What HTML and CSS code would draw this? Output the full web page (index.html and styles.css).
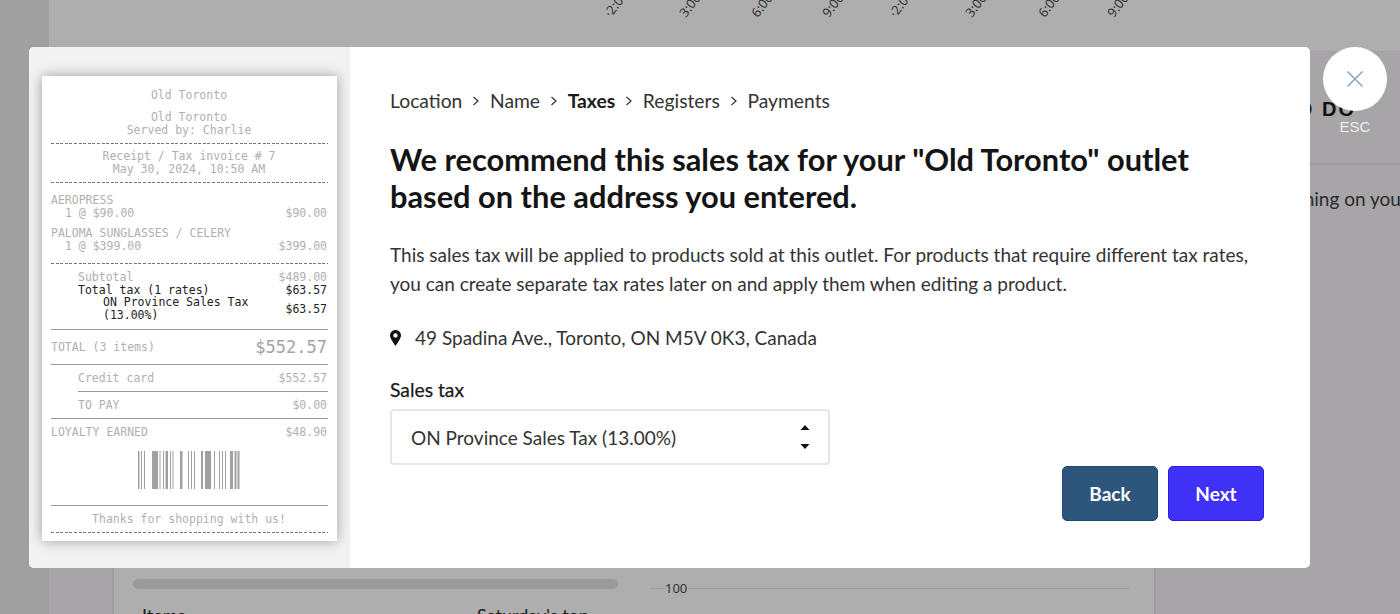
FILE: index.html
```html
<!DOCTYPE html>
<html lang="en">
<head>
<meta charset="utf-8">
<title>Outlet setup</title>
<link rel="stylesheet" href="styles.css">
</head>
<body>
<div class="page">
  <div class="sidebar"></div>
  <main class="content">
    <section class="chart-top">
      <span class="tick t1">·2:00</span><span class="tick t2">3:00</span><span class="tick t3">6:00</span><span class="tick t4">9:00</span>
      <span class="tick t5">·2:00</span><span class="tick t6">3:00</span><span class="tick t7">6:00</span><span class="tick t8">9:00</span>
    </section>
    <div class="lower">
      <section class="card">
        <div class="card-foot">
          <div class="bar-col">
            <div class="grey-bar"></div>
            <div class="foot-labels"><span class="foot-first">Items</span><span>Saturday's top</span></div>
          </div>
          <div class="axis"><span class="axis-line short"></span><span>100</span><span class="axis-line"></span></div>
        </div>
      </section>
      <aside class="right">
        <div class="right-head"><strong>TO DO</strong></div>
        <p>Everything on your</p>
      </aside>
    </div>
  </main>
</div>

<div class="modal">
  <div class="preview">
    <div class="receipt">
      <div class="center">Old Toronto</div>
      <div class="center gap-s">Old Toronto<br>Served by: Charlie</div>
      <div class="dash"></div>
      <div class="center">Receipt / Tax invoice # 7<br>May 30, 2024, 10:50 AM</div>
      <div class="dash"></div>
      <div class="item first">AEROPRESS</div>
      <div class="row"><span class="ind1">1 @ $90.00</span><span>$90.00</span></div>
      <div class="item second">PALOMA SUNGLASSES / CELERY</div>
      <div class="row"><span class="ind1">1 @ $399.00</span><span>$399.00</span></div>
      <div class="dash after-list"></div>
      <div class="row ind2 lead"><span>Subtotal</span><span>$489.00</span></div>
      <div class="row ind2 dark"><span>Total tax (1 rates)</span><span>$63.57</span></div>
      <div class="row ind3 dark mid tight"><span>ON Province Sales Tax<br>(13.00%)</span><span>$63.57</span></div>
      <div class="solid after-tax"></div>
      <div class="row mid total"><span>TOTAL (3 items)</span><span class="big">$552.57</span></div>
      <div class="solid"></div>
      <div class="row ind2 pad"><span>Credit card</span><span>$552.57</span></div>
      <div class="solid inset"></div>
      <div class="row ind2 pad"><span>TO PAY</span><span>$0.00</span></div>
      <div class="solid"></div>
      <div class="row pad"><span>LOYALTY EARNED</span><span>$48.90</span></div>
      <svg class="barcode" width="102" height="38" viewBox="0 0 102 38" aria-hidden="true"><path d="M0 0h1.500v38H0zM3 0h1v38H3zM6 0h1v38H6zM14 0h6v38h-6zM21.500 0h1v38h-1zM25 0h1v38h-1zM27.500 0h2.500v38h-2.500zM32 0h1v38h-1zM34.500 0h1v38h-1zM42 0h2.500v38H42zM50 0h1v38h-1zM53 0h1v38h-1zM56 0h1v38h-1zM63 0h2v38h-2zM67 0h6v38h-6zM76 0h1v38h-1zM81 0h1v38h-1zM84 0h1v38h-1zM87 0h1v38h-1zM92 0h3v38h-3zM96.500 0h2v38h-2zM99.500 0h2v38h-2z" fill="#a0a0a0"/></svg>
      <div class="solid"></div>
      <div class="center thanks">Thanks for shopping with us!</div>
      <div class="dash end"></div>
    </div>
  </div>
  <div class="form">
    <nav class="crumbs">
      <span>Location</span>
      <svg class="chev" width="8" height="12" viewBox="0 0 8 12"><path d="M1.500 2l4.500 4-4.500 4" fill="none" stroke="#333" stroke-width="1.200"/></svg>
      <span>Name</span>
      <svg class="chev" width="8" height="12" viewBox="0 0 8 12"><path d="M1.500 2l4.500 4-4.500 4" fill="none" stroke="#333" stroke-width="1.200"/></svg>
      <span class="current">Taxes</span>
      <svg class="chev" width="8" height="12" viewBox="0 0 8 12"><path d="M1.500 2l4.500 4-4.500 4" fill="none" stroke="#333" stroke-width="1.200"/></svg>
      <span>Registers</span>
      <svg class="chev" width="8" height="12" viewBox="0 0 8 12"><path d="M1.500 2l4.500 4-4.500 4" fill="none" stroke="#333" stroke-width="1.200"/></svg>
      <span>Payments</span>
    </nav>
    <h1>We recommend this sales tax for your "Old Toronto" outlet based on the address you entered.</h1>
    <p class="desc">This sales tax will be applied to products sold at this outlet. For products that require different tax rates, you can create separate tax rates later on and apply them when editing a product.</p>
    <div class="address">
      <svg width="11" height="16" viewBox="0 0 11 16" aria-hidden="true"><path fill-rule="evenodd" d="M5.500 0A5.300 5.300 0 0 1 11 5.300c0 3-3.500 7.700-5.500 10.700C3.500 13 0 8.300 0 5.300A5.300 5.300 0 0 1 5.500 0zm0 3.200a2.200 2.200 0 1 0 0 4.400 2.200 2.200 0 0 0 0-4.400z" fill="#111"/></svg>
      <span>49 Spadina Ave., Toronto, ON M5V 0K3, Canada</span>
    </div>
    <label class="label">Sales tax</label>
    <div class="select">
      <span>ON Province Sales Tax (13.00%)</span>
      <svg width="10" height="24" viewBox="0 0 10 24" aria-hidden="true"><path d="M5 0l4.500 5H.5zM5 24l4.500-5H.5z" fill="#111"/></svg>
    </div>
    <div class="actions">
      <button class="btn back" type="button">Back</button>
      <button class="btn next" type="button">Next</button>
    </div>
  </div>
</div>

<div class="close">
  <div class="close-circle">
    <svg width="20" height="20" viewBox="0 0 20 20" aria-hidden="true"><path d="M2.500 2.500l15 15M17.500 2.500l-15 15" stroke="#8fa6bc" stroke-width="1.600" fill="none"/></svg>
  </div>
  <span>ESC</span>
</div>
</body>
</html>
```
FILE: styles.css
```css
* { box-sizing: border-box; }
html, body { margin: 0; height: 100%; overflow: hidden; }
body { font-family: Lato, "Noto Sans", sans-serif; background: #a7a5a7; color: #1a1a1a; }

.page { display: flex; height: 614px; }
.sidebar { width: 49px; background: #a1a0a1; flex: none; }
.content { flex: 1; display: flex; flex-direction: column; min-width: 0; }
.chart-top { position: relative; height: 52px; background: #aeaeae; border-bottom: 1px solid #a2a2a2; flex: none; }
.tick { position: absolute; top: 4px; font: 13px/16px "Noto Sans", sans-serif; color: #333; transform: rotate(-52deg); transform-origin: left bottom; }
.t1 { left: 564px; } .t2 { left: 639px; } .t3 { left: 711px; } .t4 { left: 782px; }
.t5 { left: 849px; } .t6 { left: 925px; } .t7 { left: 998px; } .t8 { left: 1067px; }

.lower { flex: 1; display: flex; min-height: 0; }
.card { width: 1044px; margin-left: 63px; background: #aeaeae; border-left: 2px solid #9d9d9d; border-right: 2px solid #9d9d9d; display: flex; flex-direction: column; justify-content: flex-end; }
.card-foot { display: flex; gap: 32px; padding-left: 19px; height: 35px; align-items: flex-start; }
.bar-col { width: 485px; flex: none; }
.grey-bar { height: 10px; border-radius: 5px; background: #9a9a9a; }
.foot-labels { display: flex; padding: 15px 0 0 9px; font-size: 18px; line-height: 22px; width: 600px; color: #1a1a1a; white-space: nowrap; }
.foot-first { width: 335px; flex: none; }
.axis { flex: 1; display: flex; align-items: center; margin-right: 24px; height: 18px; font: 13px/18px "Noto Sans", sans-serif; color: #333; }
.axis-line { flex: 1; height: 1px; background: #a0a0a0; }
.axis-line.short { flex: none; width: 15px; }

.right { flex: 1; min-width: 0; white-space: nowrap; overflow: hidden; }
.right-head { height: 113px; border-bottom: 2px solid #9c9a9c; padding: 46px 0 0 127px; }
.right-head strong { font: 700 20px "Liberation Sans", sans-serif; letter-spacing: 2px; color: #111; }
.right p { margin: 22px 0 0 94px; font-size: 19px; color: #2a2a2a; }

.modal { position: absolute; left: 29px; top: 47px; width: 1281px; height: 521px; background: #fff; border-radius: 5px; display: flex; overflow: hidden; }
.preview { width: 321px; flex: none; background: #f2f2f2; padding: 29px 13px 0 13px; }
.receipt { width: 295px; height: 465px; background: #fff; box-shadow: 0 0 12px rgba(0,0,0,.35); padding: 13px 10px 0 9px; font: 11.5px/13px "DejaVu Sans Mono", monospace; color: #b0b0b0; }
.center { text-align: center; }
.gap-s { margin-top: 9px; }
.dash { height: 1px; margin: 6px -1px 6px 0; background: repeating-linear-gradient(90deg, #777 0 3px, transparent 3px 4.6px); }
.after-list { margin-top: 10px; }
.first { margin-top: 11px; }
.second { margin-top: 7px; }
.lead { margin-top: 7px; }
.tight { margin-top: -1px; }
.after-tax { margin-top: 7px; }
.solid { height: 0; border-top: 1px solid #999; margin-right: -1px; }
.inset { margin-left: 27px; }
.row { display: flex; justify-content: space-between; }
.ind1 { padding-left: 14px; }
.ind2 { padding-left: 27px; }
.ind3 { padding-left: 52px; }
.dark { color: #222; }
.mid { align-items: center; }
.total { height: 34px; }
.big { font-size: 17px; color: #a4a4a4; }
.pad { padding-top: 7px; padding-bottom: 6px; }
.barcode { display: block; margin: 6px auto 16px; }
.thanks { padding-top: 7px; }

.form { flex: 1; padding: 43px 46px 0 40px; position: relative; display: flex; flex-direction: column; }
.crumbs { display: flex; align-items: center; gap: 9.8px; font-size: 19.3px; line-height: 22px; color: #333; }
.crumbs .current { font-weight: 700; color: #1a1a1a; }
h1 { margin: 29px 0 0; max-width: 830px; font-size: 30.8px; line-height: 37px; font-weight: 700; color: #141414; }
.desc { margin: 25px 0 0; font-size: 19px; line-height: 29px; color: #333; }
.address { display: flex; align-items: center; gap: 14px; margin-top: 28px; font-size: 19px; line-height: 24px; color: #333; }
.label { margin-top: 28px; font-size: 19.3px; line-height: 24px; -webkit-text-stroke: .25px #1a1a1a; color: #1a1a1a; }
.select { width: 440px; height: 56px; margin-top: 7px; border: 2px solid #e6e6e6; border-radius: 4px; padding: 0 18px 0 19px; display: flex; align-items: center; justify-content: space-between; font-size: 19px; color: #333; }
.actions { display: flex; justify-content: flex-end; gap: 10px; margin-top: 1px; }
.btn { width: 96px; height: 55px; border-radius: 5px; color: #fff; font: 700 19px Lato, sans-serif; }
.back { background: #2e557c; border: 1px solid #1d4a75; }
.next { background: #4031f7; border: 1px solid #2a1af0; }

.close { position: absolute; left: 1323px; top: 47px; width: 64px; display: flex; flex-direction: column; align-items: center; }
.close-circle { width: 64px; height: 64px; border-radius: 50%; background: #fff; display: flex; align-items: center; justify-content: center; }
.close span { margin-top: 7px; font: 15px/18px "Liberation Sans", sans-serif; color: #eee; }
```
